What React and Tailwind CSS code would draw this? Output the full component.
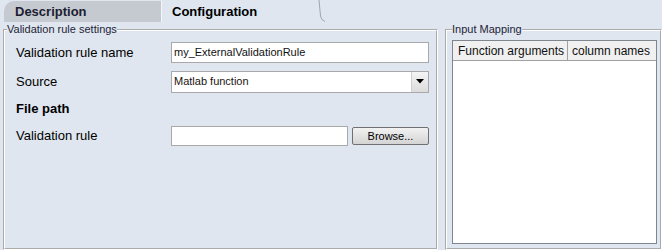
import React from "react";

const font = { fontFamily: '"Liberation Sans", Arial, sans-serif' };

function Tabs() {
  return (
    <div className="flex items-end h-[22px] pl-[4px]">
      <div className="w-[157px] h-[21px] bg-[#c5cad1] rounded-tl-[10px] flex items-center pl-[11px]">
        <span className="text-[13px] font-bold text-[#1c2030] leading-none">Description</span>
      </div>
      <div className="w-[157px] h-[21px] border-l border-[#f3f5f8] flex items-center pl-[10px]">
        <span className="text-[13px] font-bold text-black leading-none">Configuration</span>
      </div>
      <svg width="8" height="22" className="block">
        <path d="M1 0 L2.5 16 Q3 20 7 21.5" stroke="#9ea5ad" strokeWidth="1" fill="none" />
      </svg>
    </div>
  );
}

function Row({ h, children }) {
  return <div className={`flex items-center ${h}`}>{children}</div>;
}

function Label({ children, bold }) {
  return (
    <div className={`w-[155px] text-[13px] text-black ${bold ? "font-bold" : ""}`}>{children}</div>
  );
}

export default function App() {
  return (
    <div className="w-[662px] h-[250px] bg-[#dfe6ef] overflow-hidden flex flex-col" style={font}>
      <Tabs />
      <div className="flex mt-[1px] pl-[3px] gap-[7px] h-[227px]">
        <fieldset className="w-[435px] h-[227px] border-2 border-white [border-style:groove]">
          <legend className="ml-[2px] text-[11px] leading-[13px] text-[#1e1e38]">
            Validation rule settings
          </legend>
          <div className="pl-[11px] pt-[2px] flex flex-col">
            <Row h="h-[29px]">
              <Label>Validation rule name</Label>
              <div className="w-[258px] h-[21px] bg-white border border-[#a9a9a9] flex items-center pl-[2px] text-[11px] text-[#111]">
                my_ExternalValidationRule
              </div>
            </Row>
            <Row h="h-[29px]">
              <Label>Source</Label>
              <div className="w-[258px] h-[22px] bg-white border border-[#a9a9a9] flex items-center text-[11px] text-[#1a1410]">
                <span className="pl-[2px] flex-1">Matlab function</span>
                <div className="w-[17px] h-[20px] bg-gradient-to-b from-[#f4f4f4] to-[#dcdcdc] border-l border-[#d0d0d0] flex items-center justify-center">
                  <svg width="8" height="5">
                    <path d="M0 0 H8 L4 4.5 Z" fill="#000" />
                  </svg>
                </div>
              </div>
            </Row>
            <Row h="h-[26px]">
              <Label bold>File path</Label>
            </Row>
            <Row h="h-[28px]">
              <Label>Validation rule</Label>
              <div className="w-[177px] h-[20px] bg-white border border-[#a9a9a9]" />
              <button className="ml-[4px] w-[77px] h-[18px] rounded-[2px] border border-[#707070] bg-gradient-to-b from-[#f2f2f2] to-[#d4d4d4] text-[11px] text-black leading-none">
                Browse...
              </button>
            </Row>
          </div>
        </fieldset>
        <fieldset className="w-[217px] h-[227px] border-2 border-white [border-style:groove] flex flex-col">
          <legend className="ml-[5px] text-[11px] leading-[13px] text-[#1e1e38]">Input Mapping</legend>
          <div className="pl-[5px] pr-[3px] pt-[4px] pb-[4px] h-[212px] flex">
            <div className="flex-1 border border-[#80868f] bg-white flex flex-col">
              <div className="h-[20px] bg-[#f0f0f0] border-b border-[#a0a0a0] flex text-[12px] text-[#111]">
                <div className="w-[115px] border-r border-[#a0a0a0] flex items-center pl-[5px]">
                  Function arguments
                </div>
                <div className="flex-1 flex items-center pl-[4px]">column names</div>
              </div>
            </div>
          </div>
        </fieldset>
      </div>
    </div>
  );
}
